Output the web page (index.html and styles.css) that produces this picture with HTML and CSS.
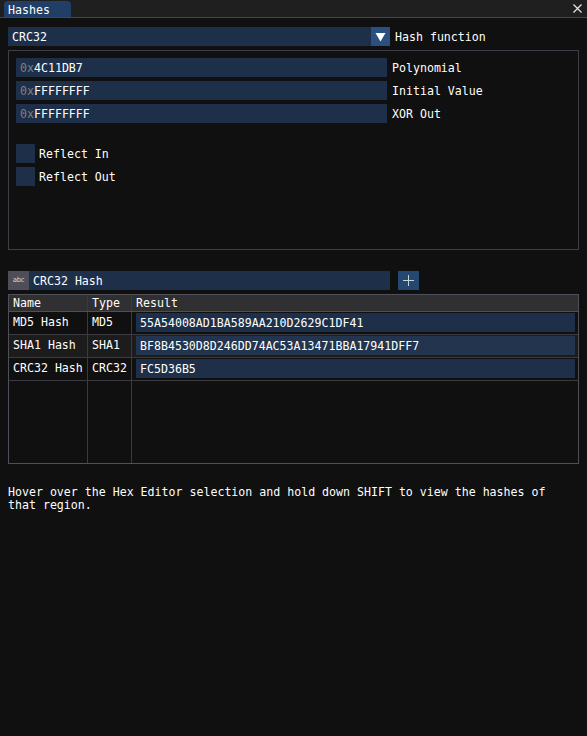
FILE: index.html
```html
<!DOCTYPE html>
<html>
<head>
<meta charset="utf-8">
<link rel="stylesheet" href="styles.css">
</head>
<body>
<div class="window">
  <div class="titlebar">
    <div class="tab">Hashes</div>
    <svg class="close" width="9" height="9" viewBox="0 0 9 9"><path d="M0.5 0.5 L8.5 8.5 M8.5 0.5 L0.5 8.5" stroke="#e6e6e6" stroke-width="1.2"/></svg>
  </div>
  <div class="content">
    <div class="row">
      <div class="combo">
        <span class="combo-text">CRC32</span>
        <span class="combo-btn"><svg width="11" height="10" viewBox="0 0 11 10"><path d="M0.5 1 L10.5 1 L5.5 9.5 Z" fill="#fff"/></svg></span>
      </div>
      <span class="label">Hash function</span>
    </div>
    <div class="child">
      <div class="row">
        <div class="input"><span class="dim">0x</span>4C11DB7</div>
        <span class="label">Polynomial</span>
      </div>
      <div class="row">
        <div class="input"><span class="dim">0x</span>FFFFFFFF</div>
        <span class="label">Initial Value</span>
      </div>
      <div class="row">
        <div class="input"><span class="dim">0x</span>FFFFFFFF</div>
        <span class="label">XOR Out</span>
      </div>
      <div class="blank"></div>
      <div class="row">
        <div class="check"></div>
        <span class="check-label">Reflect In</span>
      </div>
      <div class="row">
        <div class="check"></div>
        <span class="check-label">Reflect Out</span>
      </div>
    </div>
    <div class="row search-row">
      <div class="search">
        <span class="abc">abc</span>
        <span class="search-text">CRC32 Hash</span>
      </div>
      <div class="plus"><svg width="11" height="11" viewBox="0 0 11 11"><path d="M5.5 0 V11 M0 5.5 H11" stroke="#c8d0dc" stroke-width="1"/></svg></div>
    </div>
    <div class="table">
      <div class="tr head">
        <div class="td c1">Name</div>
        <div class="td c2">Type</div>
        <div class="td c3">Result</div>
      </div>
      <div class="tr">
        <div class="td c1">MD5 Hash</div>
        <div class="td c2">MD5</div>
        <div class="td c3"><div class="cell-input">55A54008AD1BA589AA210D2629C1DF41</div></div>
      </div>
      <div class="tr alt">
        <div class="td c1">SHA1 Hash</div>
        <div class="td c2">SHA1</div>
        <div class="td c3"><div class="cell-input">BF8B4530D8D246DD74AC53A13471BBA17941DFF7</div></div>
      </div>
      <div class="tr">
        <div class="td c1">CRC32 Hash</div>
        <div class="td c2">CRC32</div>
        <div class="td c3"><div class="cell-input">FC5D36B5</div></div>
      </div>
      <div class="tr filler">
        <div class="td c1"></div>
        <div class="td c2"></div>
        <div class="td c3"></div>
      </div>
    </div>
    <p class="hint">Hover over the Hex Editor selection and hold down SHIFT to view the hashes of that region.</p>
  </div>
</div>
</body>
</html>
```

FILE: styles.css
```css
* { box-sizing: border-box; }
html, body {
  margin: 0;
  padding: 0;
  background: #101010;
}
body {
  font-family: "DejaVu Sans Mono", "Liberation Mono", monospace;
  font-size: 11.6px;
  line-height: 13px;
  color: #ffffff;
}
.window {
  width: 587px;
  height: 736px;
  background: #101010;
}
.titlebar {
  height: 18px;
  background: #1f1f1f;
  border-bottom: 1px solid #2a4c7c;
  display: flex;
  align-items: flex-end;
  padding-left: 4px;
  position: relative;
}
.tab {
  width: 67px;
  height: 16px;
  background: #213f66;
  border-radius: 4px 4px 0 0;
  padding: 3px 0 0 4px;
}
.close {
  position: absolute;
  right: 5px;
  top: 4px;
}
.content {
  padding: 9px 8px 0 8px;
}
.row {
  display: flex;
  align-items: center;
  height: 19px;
  margin-bottom: 4px;
}
.label {
  margin-left: 5px;
  padding-top: 2px;
}
.combo {
  width: 382px;
  height: 19px;
  display: flex;
  background: rgba(41, 74, 122, 0.54);
}
.combo-text {
  flex: 1;
  padding: 4px 4px 2px 4px;
}
.combo-btn {
  width: 19px;
  height: 19px;
  background: #2a5080;
  display: flex;
  align-items: center;
  justify-content: center;
}
.child {
  margin-top: 0;
  height: 200px;
  border: 1px solid #3e3e47;
  padding: 7px 7px;
}
.input {
  width: 371px;
  height: 19px;
  background: rgba(41, 74, 122, 0.54);
  padding: 4px 4px 2px 4px;
}
.dim { color: #808080; }
.blank { height: 17px; }
.check {
  width: 19px;
  height: 19px;
  background: rgba(41, 74, 122, 0.54);
}
.check-label {
  margin-left: 4px;
  padding-top: 1px;
}
.search-row {
  margin-top: 21px;
}
.search {
  width: 382px;
  height: 19px;
  display: flex;
  background: rgba(41, 74, 122, 0.54);
}
.abc {
  width: 21px;
  height: 19px;
  background: #4e4e58;
  color: #d8d8d8;
  font-family: "DejaVu Sans", sans-serif;
  font-size: 7px;
  line-height: 19px;
  text-align: center;
  letter-spacing: -0.3px;
}
.search-text {
  padding: 4px 4px 2px 4px;
}
.plus {
  margin-left: 8px;
  width: 21px;
  height: 19px;
  background: #24486f;
  display: flex;
  align-items: center;
  justify-content: center;
}
.table {
  border: 1px solid #4f4f59;
  height: 170px;
  display: flex;
  flex-direction: column;
}
.tr {
  display: flex;
  height: 23px;
  border-bottom: 1px solid #3a3a40;
}
.tr.head {
  height: 17px;
  background: #303033;
  border-bottom: 1px solid #4f4f59;
}
.tr.alt { background: #1c1c1c; }
.tr.filler {
  flex: 1;
  border-bottom: none;
}
.td {
  padding: 4px 4px 0 4px;
}
.head .td { padding: 2px 4px 0 4px; }
.c1 { width: 79px; border-right: 1px solid #3a3a40; }
.c2 { width: 44px; border-right: 1px solid #3a3a40; }
.c3 { flex: 1; padding: 1px 3px 0 4px; }
.tr .c3 { padding: 1px 3px 0 4px; }
.head .c3 { padding: 2px 4px 0 4px; }
.cell-input {
  height: 19px;
  background: rgba(41, 74, 122, 0.54);
  padding: 4px 4px 2px 4px;
}
.hint {
  margin: 22px 0 0 0;
  width: 555px;
}
```
